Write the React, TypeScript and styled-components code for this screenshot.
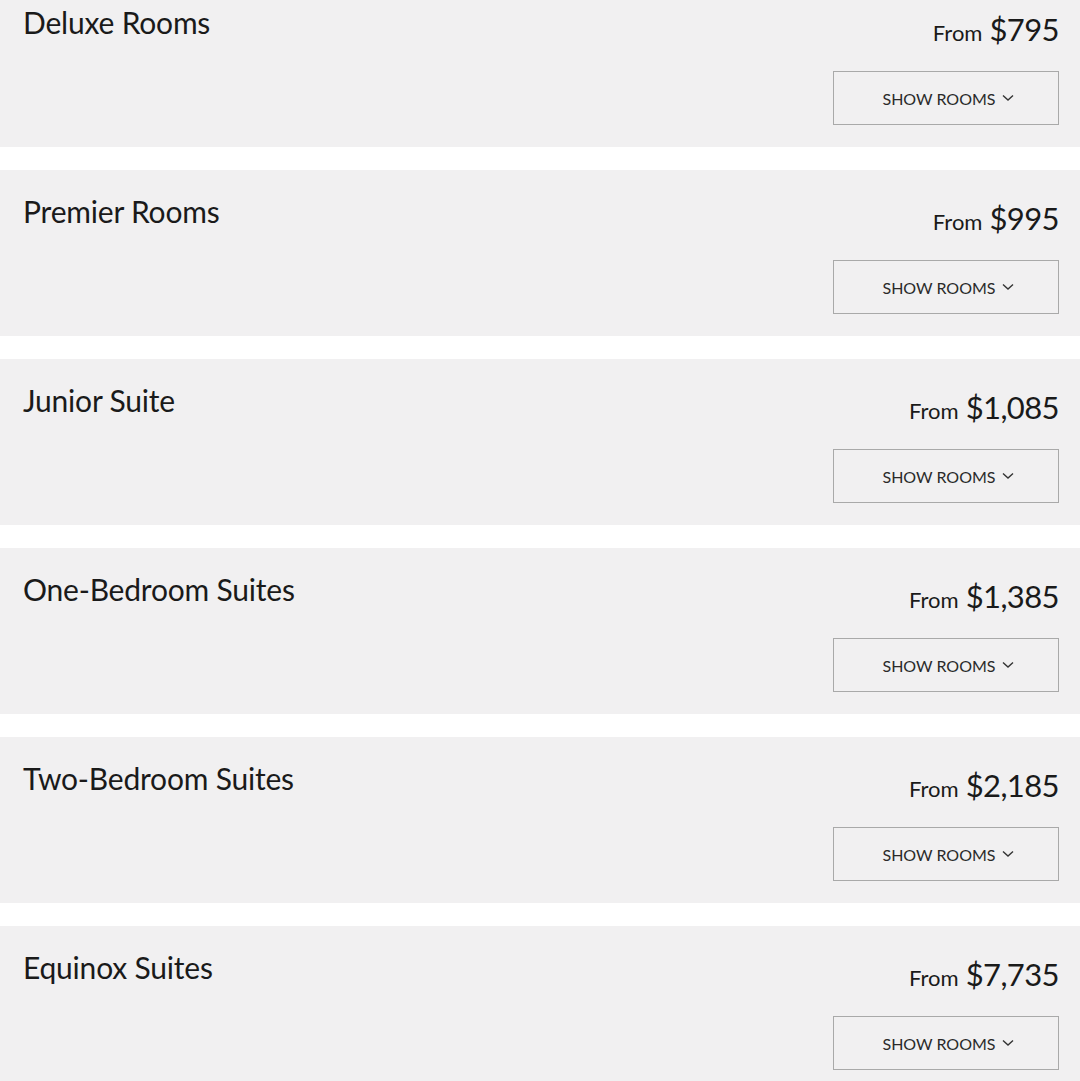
import React from "react";
import styled, { createGlobalStyle } from "styled-components";

const Global = createGlobalStyle`
  html, body { margin: 0; padding: 0; background: #ffffff; }
  body { font-family: Lato, "Open Sans", sans-serif; color: #1a1a1a; overflow: hidden; }
`;

const List = styled.div`
  display: flex;
  flex-direction: column;
  gap: 23px;
  margin-top: -19px;
  height: 1100px;
  overflow: hidden;
`;

const Card = styled.section`
  flex: 0 0 166px;
  box-sizing: border-box;
  background: #f1f0f1;
  display: flex;
  justify-content: space-between;
  padding: 0 21px 0 23px;
`;

const Title = styled.h2`
  margin: 0;
  padding-top: 25px;
  font-size: 30px;
  line-height: 32px;
  font-weight: 400;
  color: #1a1a1a;
  letter-spacing: -0.2px;
`;

const Side = styled.div`
  display: flex;
  flex-direction: column;
  align-items: flex-end;
  padding-top: 29px;
`;

const Price = styled.div`
  display: flex;
  align-items: baseline;
  gap: 7px;
  height: 36px;
`;

const From = styled.span`
  font-size: 22px;
  color: #1a1a1a;
`;

const Amount = styled.span`
  font-size: 31px;
  letter-spacing: -0.6px;
  color: #1a1a1a;
`;

const Button = styled.button`
  margin-top: 25px;
  width: 226px;
  height: 54px;
  box-sizing: border-box;
  background: transparent;
  border: 1px solid #a9a9a9;
  display: flex;
  align-items: center;
  justify-content: center;
  gap: 6px;
  font-family: Lato, "Open Sans", sans-serif;
  font-size: 16px;
  color: #2a2a2a;
  padding: 0 0 0 4px;
  cursor: pointer;
`;

const Chevron = () => (
  <svg width="12" height="8" viewBox="0 0 12 8" fill="none">
    <path d="M1 1.5 L6 6 L11 1.5" stroke="#333" strokeWidth="1.4" />
  </svg>
);

const rooms = [
  { name: "Deluxe Rooms", price: "$795" },
  { name: "Premier Rooms", price: "$995" },
  { name: "Junior Suite", price: "$1,085" },
  { name: "One-Bedroom Suites", price: "$1,385" },
  { name: "Two-Bedroom Suites", price: "$2,185" },
  { name: "Equinox Suites", price: "$7,735" },
];

export default function App() {
  return (
    <>
      <Global />
      <List>
        {rooms.map((r) => (
          <Card key={r.name}>
            <Title>{r.name}</Title>
            <Side>
              <Price>
                <From>From</From>
                <Amount>{r.price}</Amount>
              </Price>
              <Button>
                SHOW ROOMS <Chevron />
              </Button>
            </Side>
          </Card>
        ))}
      </List>
    </>
  );
}
